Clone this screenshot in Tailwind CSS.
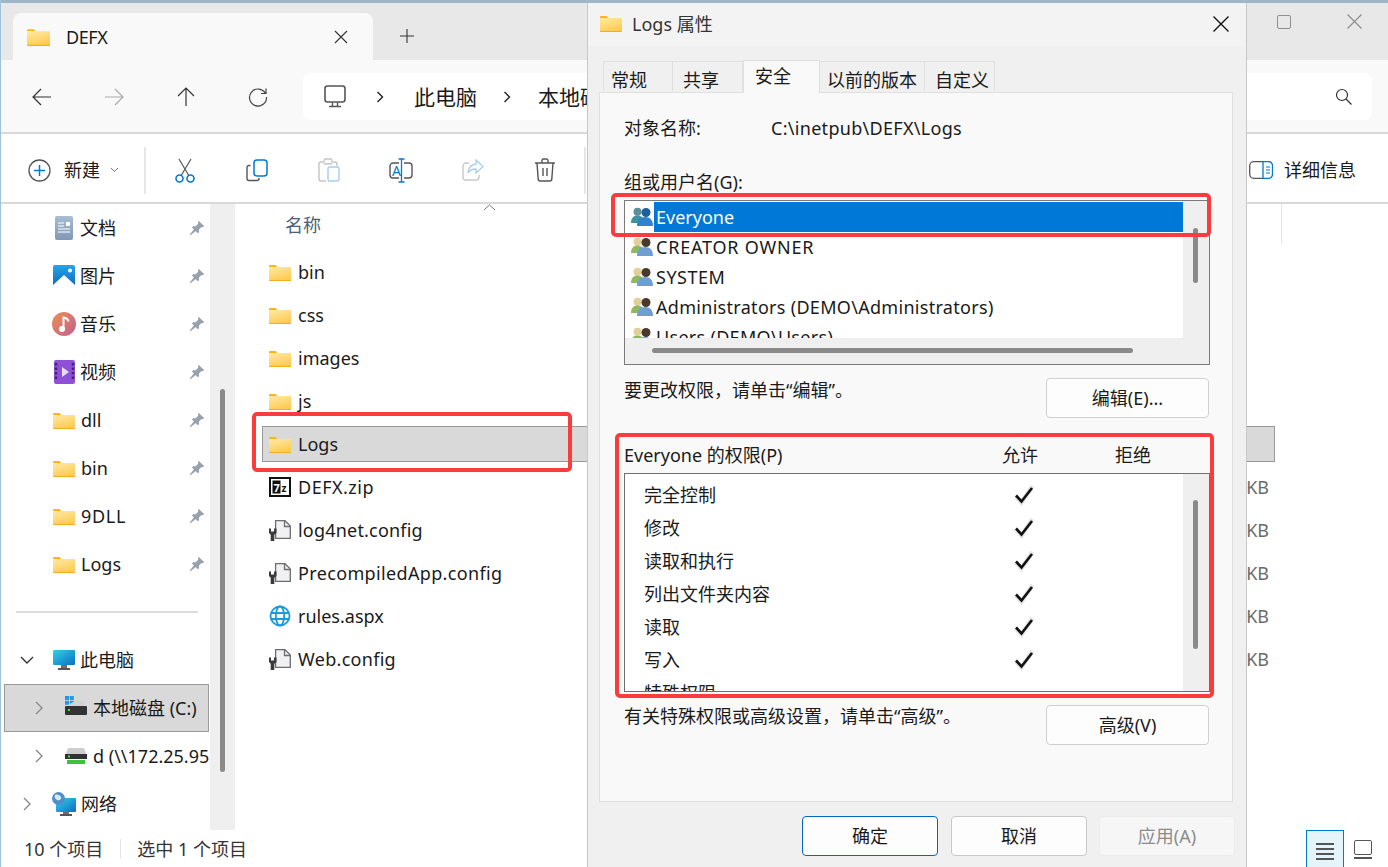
<!DOCTYPE html>
<html lang="zh-CN">
<head>
<meta charset="UTF-8">
<title>DEFX</title>
<script src="https://cdn.jsdelivr.net/npm/@tailwindcss/browser@4"></script>
</head>
<body class="m-0 bg-white">

<!-- shared icons -->
<svg class="absolute w-0 h-0" aria-hidden="true">
  <defs>
    <linearGradient id="fold" x1="0" y1="0" x2="0.4" y2="1"><stop offset="0" stop-color="#ffeaa6"/><stop offset="1" stop-color="#ffcb55"/></linearGradient>
    <linearGradient id="mon" x1="0" y1="0" x2="1" y2="1"><stop offset="0" stop-color="#32d0ea"/><stop offset="1" stop-color="#0c6fc0"/></linearGradient>
    <linearGradient id="mus" x1="0" y1="0" x2="1" y2="1"><stop offset="0" stop-color="#ef8f52"/><stop offset="1" stop-color="#c0608f"/></linearGradient>
    <linearGradient id="pic" x1="0" y1="0" x2="0" y2="1"><stop offset="0" stop-color="#27a3e8"/><stop offset="1" stop-color="#0b68bd"/></linearGradient>
    <linearGradient id="docg" x1="0" y1="0" x2="0" y2="1"><stop offset="0" stop-color="#a9bdd4"/><stop offset="1" stop-color="#7f98b5"/></linearGradient>
  </defs>
  <symbol id="folder" viewBox="0 0 22 17">
    <path d="M0 2a1 1 0 0 1 1-1h5.500l2 2H0z" fill="#fdb515"/>
    <path d="M0 3h22v13a1 1 0 0 1-1 1H1a1 1 0 0 1-1-1z" fill="url(#fold)"/>
    <path d="M0 16h22v.2a.8.8 0 0 1-.8.8H.8a.8.8 0 0 1-.8-.8z" fill="#f4ae1c"/>
  </symbol>
  <symbol id="pin" viewBox="0 0 16 16">
    <path d="M9.700 .8l5.500 5.500-1.300.9-1.300-.3-2.600 2.700v2.600l-1.200 1.100L2.900 7.400l1.100-1.100h2.600l2.700-2.600-.3-1.400zM5 9.300l1.700 1.700L1.500 15.200l-.7-.7z" fill="#98a2aa"/>
  </symbol>
  <symbol id="config" viewBox="0 0 22 21">
    <path d="M6.600 .7h9.400l5.300 5.300v12.300h-14.700z" fill="#f1f1f4" stroke="#6d6d6d" stroke-width="1.300"/>
    <path d="M15.500 .7v5.800h5.800" fill="none" stroke="#6d6d6d" stroke-width="1.300"/>
    <path d="M0 8.500l2 0 0 3 3 0 0-3 2.500 0 0 4.500-2.200 1.800 0 6.200-3.600 0 0-6.200-1.700-1.800z" fill="#3a3a3a"/>
  </symbol>
  <symbol id="users" viewBox="0 0 22 20">
    <circle cx="6.500" cy="4.800" r="4" fill="#e3cf9a"/>
    <path d="M0 16c0-5 2.500-7.500 6.500-7.500S13 11 13 16z" fill="#8fb85f"/>
    <circle cx="15" cy="5.500" r="4.500" fill="#4a3a2c"/>
    <path d="M6 19c0-6 3-9 8-9s8 3 8 9z" fill="#6f9fd0"/>
  </symbol>
  <symbol id="everyone" viewBox="0 0 22 20">
    <circle cx="6.500" cy="4.800" r="4" fill="#5c8f9e"/>
    <path d="M0 16c0-5 2.500-7.500 6.500-7.500S13 11 13 16z" fill="#3f93a0"/>
    <circle cx="15" cy="5.500" r="4.500" fill="#1d5f9a"/>
    <path d="M6 19c0-6 3-9 8-9s8 3 8 9z" fill="#2f82cf"/>
  </symbol>
  <symbol id="check" viewBox="0 0 22 24">
    <path d="M2.500 13l6 6.500L19.500 3" fill="none" stroke="#e4e4e4" stroke-width="4.500"/>
    <path d="M3 12.500l5.500 6L19 5" fill="none" stroke="#111" stroke-width="2.600"/>
  </symbol>
</svg>

<div class="relative w-[1388px] h-[867px] overflow-hidden bg-white text-[18px] leading-[24px] text-[#1a1a1a] font-['Noto_Sans','Noto_Sans_CJK_SC',sans-serif]">

  <!-- window frame -->
  <div class="h-[3px] bg-[#9fb6c9]"></div>

  <!-- tab strip -->
  <div class="h-[57px] bg-[#e8e8e8] flex items-end pl-[13px]">
    <div class="flex items-end">
      <div class="w-[360px] h-[47px] bg-[#f9f9f9] rounded-t-[8px] flex items-center pl-[14px] pr-[25px]">
        <svg class="w-[23px] h-[18px] shrink-0"><use href="#folder"/></svg>
        <span class="ml-[16px] flex-1 tracking-[-0.4px]">DEFX</span>
        <svg class="w-[14px] h-[14px]" viewBox="0 0 14 14"><path d="M1 1l12 12M13 1L1 13" stroke="#333" stroke-width="1.100"/></svg>
      </div>
      <svg class="w-[16px] h-[16px] ml-[26px] mb-[16px] shrink-0" viewBox="0 0 16 16"><path d="M8 1v14M1 8h14" stroke="#333" stroke-width="1.100"/></svg>
    </div>
    <div class="ml-auto flex items-center h-full pb-[20px] pr-[26px] gap-[56px]">
      <div class="w-[14px] h-[14px] border-[1.500px] border-[#8f8f8f] rounded-[2px]"></div>
      <svg class="w-[15px] h-[15px]" viewBox="0 0 15 15"><path d="M.5 .5l14 14M14.500 .5l-14 14" stroke="#8f8f8f" stroke-width="1.300"/></svg>
    </div>
  </div>

  <!-- nav bar -->
  <div class="h-[74px] bg-[#f9f9f9] border-b-2 border-[#d9d9d9] flex pl-[6px] pt-[13px]">
    <div class="w-[72px] h-[47px] flex items-center justify-center">
      <svg class="w-[20px] h-[18px]" viewBox="0 0 20 18"><path d="M19 9H1M9 1L1 9l8 8" fill="none" stroke="#333" stroke-width="1.200"/></svg>
    </div>
    <div class="w-[72px] h-[47px] flex items-center justify-center">
      <svg class="w-[20px] h-[18px]" viewBox="0 0 20 18"><path d="M1 9h18M11 1l8 8-8 8" fill="none" stroke="#aaa" stroke-width="1.200"/></svg>
    </div>
    <div class="w-[72px] h-[47px] flex items-center justify-center">
      <svg class="w-[18px] h-[20px]" viewBox="0 0 18 20"><path d="M9 19V1M1 9l8-8 8 8" fill="none" stroke="#333" stroke-width="1.200"/></svg>
    </div>
    <div class="w-[72px] h-[47px] flex items-center justify-center">
      <svg class="w-[20px] h-[20px]" viewBox="0 0 20 20"><path d="M17.500 6.500A8.500 8.500 0 1 0 18.500 10M18 1.500v5h-5" fill="none" stroke="#444" stroke-width="1.200"/></svg>
    </div>
    <div class="ml-[9px] w-[1069px] h-[47px] bg-white rounded-[8px] flex items-center pl-[21px] pr-[20px]">
      <svg class="w-[22px] h-[23px] shrink-0" viewBox="0 0 22 23"><rect x="1" y="1" width="20" height="16" rx="2.500" fill="none" stroke="#555" stroke-width="1.600"/><path d="M8.500 17.500v3.500M13.500 17.500v3.500M5 21.500h12" stroke="#555" stroke-width="1.400"/></svg>
      <svg class="w-[8px] h-[12px] ml-[30px] shrink-0" viewBox="0 0 8 12"><path d="M1.500 1l5 5-5 5" fill="none" stroke="#222" stroke-width="1.400"/></svg>
      <span class="ml-[30px] text-[21px]">此电脑</span>
      <svg class="w-[8px] h-[12px] ml-[26px] shrink-0" viewBox="0 0 8 12"><path d="M1.500 1l5 5-5 5" fill="none" stroke="#222" stroke-width="1.400"/></svg>
      <span class="ml-[27px] text-[21px]">本地磁盘 (C:)</span>
      <svg class="w-[17px] h-[17px] ml-auto" viewBox="0 0 17 17"><circle cx="7" cy="7" r="5.500" fill="none" stroke="#333" stroke-width="1.200"/><path d="M11 11l5.500 5.500" stroke="#333" stroke-width="1.200"/></svg>
    </div>
  </div>

  <!-- toolbar -->
  <div class="h-[70px] border-b-2 border-[#d9d9d9] flex items-center pl-[28px] pt-[4px]">
    <svg class="w-[23px] h-[23px] shrink-0" viewBox="0 0 23 23"><circle cx="11.500" cy="11.500" r="10.500" fill="none" stroke="#555" stroke-width="1.300"/><path d="M11.500 6v11M6 11.500h11" stroke="#0078d4" stroke-width="1.500"/></svg>
    <span class="ml-[13px]">新建</span>
    <svg class="w-[9px] h-[6px] ml-[10px] shrink-0" viewBox="0 0 9 6"><path d="M1 1l3.500 3.500L8 1" fill="none" stroke="#777"/></svg>
    <div class="w-[2px] h-[47px] bg-[#e6e6e6] ml-[25px] mr-[3px]"></div>
    <div class="w-[72px] flex justify-center">
      <svg class="w-[22px] h-[25px]" viewBox="0 0 22 25"><path d="M5 1l9.500 16M17 1L7.500 17" stroke="#555" stroke-width="1.200"/><circle cx="5.500" cy="20.500" r="3.500" fill="none" stroke="#0078d4" stroke-width="1.600"/><circle cx="16.500" cy="20.500" r="3.500" fill="none" stroke="#0078d4" stroke-width="1.600"/></svg>
    </div>
    <div class="w-[72px] flex justify-center">
      <svg class="w-[22px] h-[23px]" viewBox="0 0 22 23"><path d="M4.500 6.500H3A2 2 0 0 0 1 8.500v11a2 2 0 0 0 2 2h8a2 2 0 0 0 2-2V19" fill="none" stroke="#555" stroke-width="1.400"/><rect x="8" y="1" width="13" height="16" rx="3" fill="none" stroke="#0078d4" stroke-width="1.500"/></svg>
    </div>
    <div class="w-[72px] flex justify-center">
      <svg class="w-[22px] h-[24px]" viewBox="0 0 22 24"><path d="M5 4H3a2 2 0 0 0-2 2v15a2 2 0 0 0 2 2h5M15 4h2a2 2 0 0 1 2 2v2" fill="none" stroke="#c4c4c4" stroke-width="1.400"/><rect x="6" y="1" width="8" height="5" rx="1.500" fill="none" stroke="#c4c4c4" stroke-width="1.300"/><rect x="10" y="9" width="11" height="14" rx="2" fill="none" stroke="#a6cdef" stroke-width="1.400"/></svg>
    </div>
    <div class="w-[72px] flex justify-center">
      <svg class="w-[24px] h-[25px]" viewBox="0 0 24 25"><path d="M10 5H4a3 3 0 0 0-3 3v9a3 3 0 0 0 3 3h6M15 5h5a3 3 0 0 1 3 3v9a3 3 0 0 1-3 3h-5" fill="none" stroke="#555" stroke-width="1.400"/><path d="M12.500 1v23M9.500 1h6M9.500 24h6" stroke="#0078d4" stroke-width="1.300"/><text x="3" y="18" font-size="14" fill="#0078d4" font-family="Noto Sans">A</text></svg>
    </div>
    <div class="w-[72px] flex justify-center">
      <svg class="w-[22px] h-[22px]" viewBox="0 0 22 22"><path d="M7 4H4a3 3 0 0 0-3 3v11a3 3 0 0 0 3 3h10a3 3 0 0 0 3-3v-2" fill="none" stroke="#c8c8c8" stroke-width="1.400"/><path d="M14 1l7 6.500-7 6.500v-4c-4 0-6 1-8 4 .5-5 3-8.500 8-9z" fill="none" stroke="#a6cdef" stroke-width="1.300"/></svg>
    </div>
    <div class="w-[72px] flex justify-center">
      <svg class="w-[22px] h-[24px]" viewBox="0 0 22 24"><path d="M1 5h20M8 5V2.500A1.500 1.500 0 0 1 9.500 1h3A1.500 1.500 0 0 1 14 2.500V5M3 5l1.200 16a2 2 0 0 0 2 2h9.600a2 2 0 0 0 2-2L19 5M9 10v8M13 10v8" fill="none" stroke="#555" stroke-width="1.400"/></svg>
    </div>
    <div class="w-[2px] h-[47px] bg-[#e6e6e6] ml-[3px]"></div>
    <div class="ml-auto flex items-center pr-[32px]">
      <svg class="w-[24px] h-[18px]" viewBox="0 0 24 18"><rect x=".7" y=".7" width="22.600" height="16.600" rx="4" fill="none" stroke="#555" stroke-width="1.300"/><path d="M14 .7h5.500a4 4 0 0 1 4 4v8.600a4 4 0 0 1-4 4H14z" fill="#fff" stroke="#0078d4" stroke-width="1.300"/><path d="M17 6h4M17 9h4M17 12h4" stroke="#0078d4" stroke-width="1.200"/></svg>
      <span class="ml-[11px]">详细信息</span>
    </div>
  </div>

  <!-- body -->
  <div class="h-[626px] flex">

    <!-- sidebar -->
    <div class="w-[210px] overflow-hidden shrink-0">
      <div class="h-[48px] flex items-center">
        <svg class="w-[18px] h-[24px] ml-[55px] mr-[7px] shrink-0" viewBox="0 0 18 24"><rect width="18" height="24" rx="2" fill="url(#docg)"/><path d="M3 7h6M3 10h6M3 13h12M3 16h12" stroke="#fff" stroke-width="1.200"/><rect x="11" y="6" width="4" height="4" fill="#fff"/></svg>
        <span class="flex-1">文档</span>
        <svg class="w-[16px] h-[16px] mr-[5px]"><use href="#pin"/></svg>
      </div>
      <div class="h-[48px] flex items-center">
        <svg class="w-[22px] h-[22px] ml-[53px] mr-[5px] shrink-0" viewBox="0 0 22 22"><rect width="22" height="22" rx="2" fill="url(#pic)"/><path d="M0 20L11 10l11 10v2H0z" fill="#fff"/><circle cx="17" cy="5.500" r="2" fill="#fff"/></svg>
        <span class="flex-1">图片</span>
        <svg class="w-[16px] h-[16px] mr-[5px]"><use href="#pin"/></svg>
      </div>
      <div class="h-[48px] flex items-center">
        <svg class="w-[24px] h-[24px] ml-[52px] mr-[4px] shrink-0" viewBox="0 0 24 24"><circle cx="12" cy="12" r="12" fill="url(#mus)"/><circle cx="10" cy="17" r="3" fill="#fff"/><path d="M11.500 17V5.500c2 .3 4.500 1.500 5 4" fill="none" stroke="#fff" stroke-width="2"/></svg>
        <span class="flex-1">音乐</span>
        <svg class="w-[16px] h-[16px] mr-[5px]"><use href="#pin"/></svg>
      </div>
      <div class="h-[48px] flex items-center">
        <svg class="w-[21px] h-[24px] ml-[54px] mr-[5px] shrink-0" viewBox="0 0 21 24"><rect width="21" height="24" rx="2" fill="#8f50d8"/><path d="M8 7l7 5-7 5z" fill="#e8dcf8"/><path d="M2 3v18M19 3v18" stroke="#45246f" stroke-width="2.500" stroke-dasharray="2.500 2"/></svg>
        <span class="flex-1">视频</span>
        <svg class="w-[16px] h-[16px] mr-[5px]"><use href="#pin"/></svg>
      </div>
      <div class="h-[48px] flex items-center">
        <svg class="w-[22px] h-[17px] ml-[53px] mr-[6px] shrink-0"><use href="#folder"/></svg>
        <span class="flex-1">dll</span>
        <svg class="w-[16px] h-[16px] mr-[5px]"><use href="#pin"/></svg>
      </div>
      <div class="h-[48px] flex items-center">
        <svg class="w-[22px] h-[17px] ml-[53px] mr-[6px] shrink-0"><use href="#folder"/></svg>
        <span class="flex-1">bin</span>
        <svg class="w-[16px] h-[16px] mr-[5px]"><use href="#pin"/></svg>
      </div>
      <div class="h-[48px] flex items-center">
        <svg class="w-[22px] h-[17px] ml-[53px] mr-[6px] shrink-0"><use href="#folder"/></svg>
        <span class="flex-1 tracking-[0.7px]">9DLL</span>
        <svg class="w-[16px] h-[16px] mr-[5px]"><use href="#pin"/></svg>
      </div>
      <div class="h-[48px] flex items-center">
        <svg class="w-[22px] h-[17px] ml-[53px] mr-[6px] shrink-0"><use href="#folder"/></svg>
        <span class="flex-1">Logs</span>
        <svg class="w-[16px] h-[16px] mr-[5px]"><use href="#pin"/></svg>
      </div>
      <div class="h-[48px] flex items-center pl-[16px] pr-[12px]"><div class="w-full h-[2px] bg-[#dcdcdc]"></div></div>
      <div class="h-[48px] flex items-center">
        <svg class="w-[14px] h-[9px] ml-[20px] mr-[19px] shrink-0" viewBox="0 0 14 9"><path d="M1 1l6 6 6-6" fill="none" stroke="#333" stroke-width="1.400"/></svg>
        <svg class="w-[22px] h-[20px] mr-[5px] shrink-0" viewBox="0 0 22 20"><rect width="22" height="15" rx="1" fill="url(#mon)"/><rect x="8" y="15" width="6" height="3" fill="#6e6e6e"/><rect x="5" y="18" width="12" height="2" fill="#555"/></svg>
        <span>此电脑</span>
      </div>
      <div class="h-[48px] ml-[4px] mr-[1px] bg-[#d9d9d9] border border-[#999] flex items-center whitespace-nowrap">
        <svg class="w-[8px] h-[14px] ml-[30px] mr-[22px] shrink-0" viewBox="0 0 8 14"><path d="M1 1l6 6-6 6" fill="none" stroke="#8a8a8a" stroke-width="1.400"/></svg>
        <svg class="w-[22px] h-[20px] mr-[6px] shrink-0 mb-[4px]" viewBox="0 0 22 20"><rect width="4" height="4" fill="#1e9be8"/><rect x="4.800" width="4" height="4" fill="#1e9be8"/><rect y="4.800" width="4" height="4" fill="#1e9be8"/><rect x="4.800" y="4.800" width="4" height="4" fill="#1e9be8"/><path d="M10 5h7l4 5H1z" fill="#d4d4d4"/><rect y="10" width="22" height="9" rx="1" fill="#333"/><rect x="3" y="13" width="2" height="2" fill="#4ade4a"/></svg>
        <span>本地磁盘 (C:)</span>
      </div>
      <div class="h-[48px] flex items-center whitespace-nowrap">
        <svg class="w-[8px] h-[14px] ml-[35px] mr-[22px] shrink-0" viewBox="0 0 8 14"><path d="M1 1l6 6-6 6" fill="none" stroke="#8a8a8a" stroke-width="1.400"/></svg>
        <svg class="w-[22px] h-[18px] mr-[6px] shrink-0" viewBox="0 0 22 18"><path d="M3 1h16l3 8H0z" fill="#cfcfcf"/><rect y="7" width="22" height="5" fill="#333"/><rect x="3" y="8.500" width="2" height="2" fill="#4ade4a"/><rect x="2" y="13" width="18" height="4" fill="#3cc13c"/></svg>
        <span>d (\\172.25.95.1)</span>
      </div>
      <div class="h-[48px] flex items-center">
        <svg class="w-[8px] h-[14px] ml-[23px] mr-[21px] shrink-0" viewBox="0 0 8 14"><path d="M1 1l6 6-6 6" fill="none" stroke="#8a8a8a" stroke-width="1.400"/></svg>
        <svg class="w-[24px] h-[24px] mr-[5px] shrink-0" viewBox="0 0 24 24"><rect x="4" y="6" width="20" height="14" rx="1" fill="url(#mon)"/><rect x="11" y="20" width="6" height="2" fill="#6e6e6e"/><rect x="8" y="22" width="12" height="2" fill="#555"/><circle cx="6.500" cy="6.500" r="6.500" fill="#4f8fc9"/><path d="M3 3c2-1 5 0 6 2s-2 4-4 3-3-3-2-5z" fill="#d6e8f6"/></svg>
        <span>网络</span>
      </div>
    </div>

    <!-- sidebar scrollbar -->
    <div class="w-[25px] shrink-0 h-[626px] bg-[#efefef] pl-[10px] pt-[185px]">
      <div class="w-[5px] h-[383px] rounded-full bg-[#8a8a8a]"></div>
    </div>

    <!-- file list -->
    <div class="flex-1 relative">
      <div class="h-[40px] mb-[10px] mr-[106px] border-r border-[#e5e5e5] pl-[50px] pt-[9px] text-[#4c607a]">名称</div>
      <svg class="absolute left-[248px] top-[0px] w-[13px] h-[7px]" viewBox="0 0 13 7"><path d="M1 6l5.500-5L12 6" fill="none" stroke="#777"/></svg>
      <div class="flex flex-col gap-[7px] ml-[27px] w-[1013px]">
        <div class="h-[36px] border border-transparent pl-[6px] flex items-center gap-[7px]">
          <svg class="w-[22px] h-[17px]"><use href="#folder"/></svg><span>bin</span>
        </div>
        <div class="h-[36px] border border-transparent pl-[6px] flex items-center gap-[7px]">
          <svg class="w-[22px] h-[17px]"><use href="#folder"/></svg><span>css</span>
        </div>
        <div class="h-[36px] border border-transparent pl-[6px] flex items-center gap-[7px]">
          <svg class="w-[22px] h-[17px]"><use href="#folder"/></svg><span>images</span>
        </div>
        <div class="h-[36px] border border-transparent pl-[6px] flex items-center gap-[7px]">
          <svg class="w-[22px] h-[17px]"><use href="#folder"/></svg><span>js</span>
        </div>
        <div class="h-[36px] border border-[#999] bg-[#d9d9d9] pl-[6px] flex items-center gap-[7px]">
          <svg class="w-[22px] h-[17px]"><use href="#folder"/></svg><span>Logs</span>
        </div>
        <div class="h-[36px] border border-transparent pl-[6px] pr-[5px] flex items-center gap-[7px]">
          <svg class="w-[22px] h-[20px]" viewBox="0 0 22 20"><rect x="1" y="1" width="20" height="18" fill="#fff" stroke="#111" stroke-width="2"/><rect x="3.500" y="3.500" width="8" height="13" fill="#111"/><text x="4.500" y="14.500" font-size="11" font-weight="700" fill="#fff" font-family="Noto Sans">7</text><text x="12.500" y="15" font-size="10" font-weight="700" fill="#111" font-family="Noto Sans">z</text></svg>
          <span class="flex-1 tracking-[0.5px]">DEFX.zip</span><span class="text-[#6b6b6b]">KB</span>
        </div>
        <div class="h-[36px] border border-transparent pl-[6px] pr-[5px] flex items-center gap-[7px]">
          <svg class="w-[22px] h-[21px]"><use href="#config"/></svg>
          <span class="flex-1 tracking-[0.2px]">log4net.config</span><span class="text-[#6b6b6b]">KB</span>
        </div>
        <div class="h-[36px] border border-transparent pl-[6px] pr-[5px] flex items-center gap-[7px]">
          <svg class="w-[22px] h-[21px]"><use href="#config"/></svg>
          <span class="flex-1 tracking-[0.35px]">PrecompiledApp.config</span><span class="text-[#6b6b6b]">KB</span>
        </div>
        <div class="h-[36px] border border-transparent pl-[6px] pr-[5px] flex items-center gap-[7px]">
          <svg class="w-[22px] h-[22px]" viewBox="0 0 22 22"><g fill="none" stroke="#1b9bdc" stroke-width="1.800"><circle cx="11" cy="11" r="9.500"/><ellipse cx="11" cy="11" rx="4.200" ry="9.500"/><path d="M2 8h18M2 14h18"/></g></svg>
          <span class="flex-1">rules.aspx</span><span class="text-[#6b6b6b]">KB</span>
        </div>
        <div class="h-[36px] border border-transparent pl-[6px] pr-[5px] flex items-center gap-[7px]">
          <svg class="w-[22px] h-[21px]"><use href="#config"/></svg>
          <span class="flex-1 tracking-[0.3px]">Web.config</span><span class="text-[#6b6b6b]">KB</span>
        </div>
      </div>
    </div>
  </div>

  <!-- status bar -->
  <div class="h-[37px] flex items-center pl-[24px] text-[#333]">
    <span>10 个项目</span>
    <div class="w-px h-[20px] bg-[#e5e5e5] ml-[17px] mr-[16px]"></div>
    <span>选中 1 个项目</span>
    <div class="ml-auto flex items-start self-stretch pr-[16px]">
      <div class="w-[38px] h-[37px] bg-[#e5f3fb] border border-b-0 border-[#0078d7] flex flex-col items-center gap-[3.500px] pt-[12px]">
        <div class="w-[18px] h-[1.500px] bg-[#555]"></div>
        <div class="w-[18px] h-[1.500px] bg-[#555]"></div>
        <div class="w-[18px] h-[1.500px] bg-[#555]"></div>
        <div class="w-[18px] h-[1.500px] bg-[#555]"></div>
      </div>
      <div class="ml-[10px] mt-[10px] w-[18px]">
        <div class="h-[15px] border-[1.500px] border-[#555] rounded-[2px]"></div>
        <div class="h-[1.500px] mt-[2px] bg-[#555]"></div>
      </div>
    </div>
  </div>

  <div class="absolute left-0 top-0 w-px h-full bg-[#9fc3dc]"></div>

  <!-- properties dialog -->
  <div class="absolute left-[587px] top-[3px] w-[660px] h-[864px] bg-[#f0f0f0] border-x border-[#c8c8c8] flex flex-col">
    <div class="h-[43px] bg-[#f3f3f3] flex items-center pl-[12px] pr-[17px] pb-[2px] shrink-0">
      <svg class="w-[22px] h-[17px]"><use href="#folder"/></svg>
      <span class="ml-[10px] flex-1 text-[#333]">Logs 属性</span>
      <svg class="w-[16px] h-[16px]" viewBox="0 0 16 16"><path d="M.5 .5l15 15M15.500 .5l-15 15" stroke="#111" stroke-width="1.400"/></svg>
    </div>

    <!-- tabs -->
    <div class="h-[46px] pl-[15px] flex items-end shrink-0 relative z-10">
      <div class="w-[70px] h-[30px] bg-[#f0f0f0] border border-b-0 border-[#e0e0e0] flex items-center pl-[7px] pt-[7px] mb-px">常规</div>
      <div class="w-[70px] h-[30px] bg-[#f0f0f0] border border-b-0 border-l-0 border-[#e0e0e0] flex items-center pl-[10px] pt-[7px] mb-px">共享</div>
      <div class="w-[77px] h-[33px] bg-[#f9f9f9] border border-b-0 border-[#e0e0e0] flex items-center pl-[11px] pb-[3px] -mb-px">安全</div>
      <div class="w-[105px] h-[30px] bg-[#f0f0f0] border border-b-0 border-l-0 border-[#e0e0e0] flex items-center pl-[7px] pt-[7px] mb-px">以前的版本</div>
      <div class="w-[70px] h-[30px] bg-[#f0f0f0] border border-b-0 border-l-0 border-[#e0e0e0] flex items-center pl-[10px] pt-[7px] mb-px">自定义</div>
    </div>

    <!-- security panel -->
    <div class="ml-[11px] w-[634px] h-[710px] bg-[#f9f9f9] border border-[#e0e0e0] pl-[24px] pr-[22px] shrink-0">
      <div class="mt-[23px] flex">
        <span class="w-[147px]">对象名称:</span>
        <span class="tracking-[0.3px]">C:\inetpub\DEFX\Logs</span>
      </div>
      <div class="mt-[30px]">组或用户名(G):</div>

      <div class="mt-[6px] h-[165px] w-[586px] border border-[#7a7a7a] bg-white flex flex-col">
        <div class="h-[137px] flex">
          <div class="flex-1 pt-px overflow-hidden">
            <div class="h-[30px] flex items-center pl-[6px]">
              <svg class="w-[22px] h-[20px] mr-px shrink-0"><use href="#everyone"/></svg>
              <span class="flex-1 h-[30px] leading-[30px] bg-[#0078d7] text-white pl-[2px]">Everyone</span>
            </div>
            <div class="h-[30px] flex items-center pl-[6px] gap-[3px]">
              <svg class="w-[22px] h-[20px] shrink-0"><use href="#users"/></svg><span class="tracking-[0.8px]">CREATOR OWNER</span>
            </div>
            <div class="h-[30px] flex items-center pl-[6px] gap-[3px]">
              <svg class="w-[22px] h-[20px] shrink-0"><use href="#users"/></svg><span class="tracking-[0.5px]">SYSTEM</span>
            </div>
            <div class="h-[30px] flex items-center pl-[6px] gap-[3px]">
              <svg class="w-[22px] h-[20px] shrink-0"><use href="#users"/></svg><span class="tracking-[0.3px]">Administrators (DEMO\Administrators)</span>
            </div>
            <div class="h-[30px] flex items-center pl-[6px] gap-[3px]">
              <svg class="w-[22px] h-[20px] shrink-0"><use href="#users"/></svg><span class="tracking-[0.3px]">Users (DEMO\Users)</span>
            </div>
          </div>
          <div class="w-[26px] bg-[#efefef] pl-[10px] pt-[27px] shrink-0">
            <div class="w-[5px] h-[55px] rounded-full bg-[#8a8a8a]"></div>
          </div>
        </div>
        <div class="flex-1 bg-[#efefef] pl-[27px] pt-[10px]">
          <div class="w-[481px] h-[5px] rounded-full bg-[#8a8a8a]"></div>
        </div>
      </div>

      <div class="mt-[13px] flex justify-between items-start w-[585px]">
        <span>要更改权限，请单击“编辑”。</span>
        <div class="w-[163px] h-[40px] bg-[#fdfdfd] border border-[#d0d0d0] rounded-[4px] flex items-center justify-center">编辑(E)...</div>
      </div>

      <div class="mt-[25px] flex w-[586px]">
        <span class="w-[378px]">Everyone 的权限(P)</span>
        <span class="w-[113px]">允许</span>
        <span>拒绝</span>
      </div>

      <div class="mt-[6px] h-[219px] w-[586px] border border-[#6e6e6e] bg-white flex">
        <div class="flex-1 overflow-hidden pt-[4px] pl-[19px]">
          <div class="h-[33px] flex items-center"><span class="w-[369px]">完全控制</span><svg class="w-[22px] h-[24px]"><use href="#check"/></svg></div>
          <div class="h-[33px] flex items-center"><span class="w-[369px]">修改</span><svg class="w-[22px] h-[24px]"><use href="#check"/></svg></div>
          <div class="h-[33px] flex items-center"><span class="w-[369px]">读取和执行</span><svg class="w-[22px] h-[24px]"><use href="#check"/></svg></div>
          <div class="h-[33px] flex items-center"><span class="w-[369px]">列出文件夹内容</span><svg class="w-[22px] h-[24px]"><use href="#check"/></svg></div>
          <div class="h-[33px] flex items-center"><span class="w-[369px]">读取</span><svg class="w-[22px] h-[24px]"><use href="#check"/></svg></div>
          <div class="h-[33px] flex items-center"><span class="w-[369px]">写入</span><svg class="w-[22px] h-[24px]"><use href="#check"/></svg></div>
          <div class="h-[33px] flex items-center"><span class="w-[369px]">特殊权限</span></div>
        </div>
        <div class="w-[26px] bg-[#efefef] pl-[10px] pt-[26px] shrink-0">
          <div class="w-[5px] h-[149px] rounded-full bg-[#8a8a8a]"></div>
        </div>
      </div>

      <div class="mt-[13px] flex justify-between items-start w-[585px]">
        <span class="-mt-[1px]">有关特殊权限或高级设置，请单击“高级”。</span>
        <div class="w-[163px] h-[40px] bg-[#fdfdfd] border border-[#d0d0d0] rounded-[4px] flex items-center justify-center">高级(V)</div>
      </div>
    </div>

    <!-- dialog buttons -->
    <div class="mt-[14px] ml-[214px] flex">
      <div class="w-[136px] h-[40px] bg-[#fdfdfd] border-[1.500px] border-[#0067c0] rounded-[4px] flex items-center justify-center">确定</div>
      <div class="w-[136px] h-[40px] ml-[13px] bg-[#fdfdfd] border border-[#c8c8c8] rounded-[4px] flex items-center justify-center">取消</div>
      <div class="w-[136px] h-[40px] ml-[12px] bg-[#f6f6f6] border border-[#ececec] rounded-[4px] flex items-center justify-center text-[#8c8c8c]">应用(A)</div>
    </div>
  </div>

  <!-- red annotation boxes -->
  <div class="absolute left-[252px] top-[412px] w-[320px] h-[60px] border-[4px] border-[#fb3c3c] rounded-[5px]"></div>
  <div class="absolute left-[611px] top-[193px] w-[600px] h-[44px] border-[4px] border-[#fb3c3c] rounded-[5px]"></div>
  <div class="absolute left-[615px] top-[433px] w-[599px] h-[265px] border-[4px] border-[#fb3c3c] rounded-[5px]"></div>
</div>
</body>
</html>
